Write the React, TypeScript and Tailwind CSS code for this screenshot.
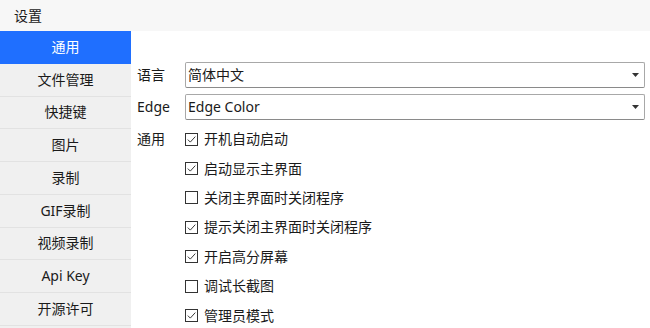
import React, { useState } from 'react';

const menu = ['通用', '文件管理', '快捷键', '图片', '录制', 'GIF录制', '视频录制', 'Api Key', '开源许可'];

const options = [
  { label: '开机自动启动', checked: true },
  { label: '启动显示主界面', checked: true },
  { label: '关闭主界面时关闭程序', checked: false },
  { label: '提示关闭主界面时关闭程序', checked: true },
  { label: '开启高分屏幕', checked: true },
  { label: '调试长截图', checked: false },
  { label: '管理员模式', checked: true },
];

function CheckBox({ checked }: { checked: boolean }) {
  return (
    <span className="w-[13px] h-[13px] border border-[#333] bg-white flex items-center justify-center shrink-0">
      {checked && (
        <svg width="11" height="11" viewBox="0 0 11 11">
          <path d="M1.8 5.6 L4.3 8.1 L9.3 2.6" fill="none" stroke="#3a3a3a" strokeWidth="1" />
        </svg>
      )}
    </span>
  );
}

function Combo({ value }: { value: string }) {
  return (
    <div className="flex-1 h-[26px] border border-[#a8a8a8] border-b-[#8a8a8a] rounded-[2px] bg-white flex items-center pl-[2px] pr-[5px]">
      <span className="flex-1">{value}</span>
      <svg width="7" height="4" viewBox="0 0 7 4">
        <path d="M0 0 L7 0 L3.5 4 Z" fill="#333" />
      </svg>
    </div>
  );
}

export default function App() {
  const [active, setActive] = useState(0);
  const [checks, setChecks] = useState(options.map((o) => o.checked));

  return (
    <div className="w-[650px] h-[328px] overflow-hidden flex flex-col bg-white text-[14px] text-[#1a1a1a] font-['Noto_Sans','Noto_Sans_CJK_SC',sans-serif]">
      <header className="h-[31px] shrink-0 bg-[#f7f7f7] flex items-center pl-[14px] leading-none">设置</header>

      <div className="flex-1 flex">
        <nav className="w-[131px] bg-[#f0f0f0] flex flex-col">
          {menu.map((item, i) => (
            <button
              key={item}
              onClick={() => setActive(i)}
              className={`h-[32.75px] shrink-0 flex items-center justify-center leading-none border-b ${
                i === active ? 'bg-[#1f6fff] text-white border-[#1f6fff]' : 'border-[#e2e2e2]'
              }`}
            >
              {item}
            </button>
          ))}
        </nav>

        <div className="flex-1 pt-[31px] pl-[6px] pr-[5px] leading-none">
          <div className="flex items-center h-[26px] mb-[6px]">
            <span className="w-[48px]">语言</span>
            <Combo value="简体中文" />
          </div>
          <div className="flex items-center h-[26px]">
            <span className="w-[48px]">Edge</span>
            <Combo value="Edge Color" />
          </div>
          <div className="flex mt-[4.5px]">
            <span className="w-[48px] h-[29.4px] flex items-center">通用</span>
            <div className="flex flex-col">
              {options.map((o, i) => (
                <label
                  key={o.label}
                  className="h-[29.4px] flex items-center gap-[6px]"
                  onClick={() => setChecks(checks.map((c, j) => (j === i ? !c : c)))}
                >
                  <CheckBox checked={checks[i]} />
                  <span>{o.label}</span>
                </label>
              ))}
            </div>
          </div>
        </div>
      </div>
    </div>
  );
}
